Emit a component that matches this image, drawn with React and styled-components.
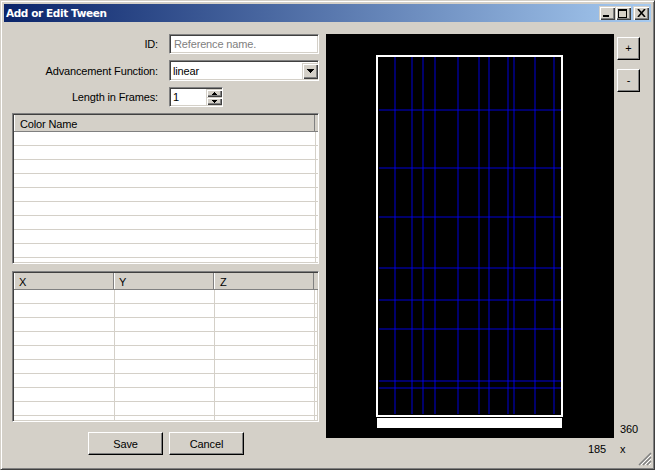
import React from "react";
import styled, { createGlobalStyle } from "styled-components";

const GlobalStyle = createGlobalStyle`
  html, body {
    margin: 0;
    padding: 0;
    background: #d4d0c8;
  }
  * {
    box-sizing: border-box;
  }
`;

const raised = `
  background: #d4d0c8;
  box-shadow: inset 1px 1px 0 #d4d0c8, inset 2px 2px 0 #fff, inset -1px -1px 0 #404040, inset -2px -2px 0 #808080;
`;

const Window = styled.div`
  position: relative;
  width: 655px;
  height: 470px;
  display: flex;
  flex-direction: column;
  padding: 3px 4px 3px 4px;
  background: #d4d0c8;
  border: 1px solid;
  border-color: #d4d0c8 #404040 #404040 #d4d0c8;
  box-shadow: inset 1px 1px 0 #ffffff, inset -1px -1px 0 #808080;
  font-family: "Liberation Sans", Arial, sans-serif;
  font-size: 11px;
  letter-spacing: -0.15px;
  color: #000;
  overflow: hidden;
`;

const TitleBar = styled.div`
  height: 18px;
  margin: 0 -1px;
  flex: none;
  display: flex;
  align-items: center;
  justify-content: space-between;
  padding: 0 2px;
  background: linear-gradient(90deg, #0a246a, #a6caf0);
`;

const Title = styled.span`
  font-family: "DejaVu Sans", Verdana, sans-serif;
  font-size: 10.5px;
  letter-spacing: -0.4px;
  font-weight: bold;
  color: #fff;
`;

const Controls = styled.div`
  display: flex;
`;

const ControlButton = styled.div`
  ${raised}
  width: 16px;
  height: 14px;
  margin-left: ${({ $gap }) => $gap || 0}px;
  display: flex;
  align-items: center;
  justify-content: center;
`;

const Body = styled.div`
  flex: 1;
  display: flex;
  padding: 12px 0 0 7px;
`;

const LeftPane = styled.div`
  width: 307px;
  display: flex;
  flex-direction: column;
`;

const FormRow = styled.div`
  display: flex;
  align-items: center;
  justify-content: flex-end;
  height: ${({ $h }) => $h}px;
  margin-bottom: ${({ $mb }) => $mb}px;
  padding-right: ${({ $pr }) => $pr || 0}px;
`;

const Label = styled.span`
  margin-right: 11px;
`;

const Sunken = styled.div`
  height: 100%;
  width: ${({ $w }) => $w}px;
  display: flex;
  align-items: center;
  background: #fff;
  border: 1px solid;
  border-color: #808080 #fff #fff #808080;
  box-shadow: inset 1px 1px 0 #404040, inset -1px -1px 0 #d4d0c8;
  padding-left: ${({ $pl }) => $pl}px;
  color: ${({ $muted }) => ($muted ? "#808080" : "#000")};
`;

const DropButton = styled.div`
  ${raised}
  width: 16px;
  height: 16px;
  margin-left: auto;
  display: flex;
  align-items: center;
  justify-content: center;
`;

const SpinColumn = styled.div`
  width: 16px;
  height: 16px;
  margin-left: auto;
  display: flex;
  flex-direction: column;
`;

const SpinButton = styled.div`
  ${raised}
  height: 8px;
  display: flex;
  align-items: center;
  justify-content: center;
`;

const ListBox = styled.div`
  height: 151px;
  margin-bottom: ${({ $mb }) => $mb || 0}px;
  background: #fff;
  border: 1px solid;
  border-color: #808080 #fff #fff #808080;
  box-shadow: inset 1px 1px 0 #404040, inset -1px -1px 0 #d4d0c8;
  padding: 1px 0 1px 1px;
  overflow: hidden;
  display: flex;
  flex-direction: column;
`;

const HeaderRow = styled.div`
  height: 17px;
  flex: none;
  display: flex;
  background: #d4d0c8;
  border-bottom: 1px solid #808080;
`;

const HeaderCell = styled.div`
  width: ${({ $w }) => $w}px;
  flex: ${({ $fill }) => ($fill ? 1 : "none")};
  padding-left: ${({ $pl }) => $pl}px;
  line-height: 18px;
  border-right: ${({ $fill }) => ($fill ? "none" : "1px solid #808080")};
  box-shadow: ${({ $fill }) => ($fill ? "none" : "inset 1px 0 0 #fff")};
`;

const Rows = styled.div`
  flex: 1;
  overflow: hidden;
  box-shadow: ${({ $line }) => ($line ? "inset -2px 0 0 #fff, inset -3px 0 0 #d4d0c8" : "none")};
`;

const Row = styled.div`
  height: 14px;
  display: flex;
  border-bottom: 1px solid #d4d0c8;
`;

const Cell = styled.div`
  width: ${({ $w }) => $w}px;
  flex: none;
  border-right: 1px solid #d4d0c8;
`;

const ButtonBar = styled.div`
  display: flex;
  justify-content: center;
  gap: 6px;
  margin-top: 10px;
  padding-left: 1px;
`;

const PushButton = styled.div`
  width: 75px;
  height: 23px;
  display: flex;
  align-items: center;
  justify-content: center;
  background: #d4d0c8;
  border: 1px solid;
  border-color: #fff #000 #000 #fff;
  box-shadow: inset -1px -1px 0 #808080;
`;

const RightPane = styled.div`
  margin-left: 7px;
  flex: 1;
  display: grid;
  grid-template-columns: 288px 1fr;
  grid-template-rows: 404px auto;
`;

const Canvas = styled.svg`
  display: block;
`;

const SidePane = styled.div`
  display: flex;
  flex-direction: column;
  align-items: flex-start;
  padding: 3px 0 3px 3px;
  gap: 9px;
`;

const ZoomButton = styled.div`
  width: 23px;
  height: 23px;
  display: flex;
  align-items: center;
  justify-content: center;
  padding-bottom: 1px;
  background: #d4d0c8;
  border: 1px solid;
  border-color: #fff #000 #000 #fff;
  box-shadow: inset -1px -1px 0 #808080;
`;

const HeightText = styled.span`
  margin: auto 0 0 3px;
`;

const WidthText = styled.span`
  margin-top: 5px;
  padding-right: 8px;
  text-align: right;
`;

const UnitText = styled.span`
  margin: 5px 0 0 6px;
`;

const Grip = styled.svg`
  position: absolute;
  right: 2px;
  bottom: 3px;
`;

const colorRows = Array.from({ length: 10 });
const pointRows = Array.from({ length: 10 });
const vLines = [394, 411, 422, 434, 457, 478, 488, 507, 513, 534, 553];
const hLines = [109, 167, 216, 267, 299, 328, 380, 387];
const CANVAS_X = 326;
const CANVAS_Y = 34;

const ArrowDown = ({ size }) => (
  <svg width={size * 2 - 1} height={size} viewBox={`0 0 ${size * 2 - 1} ${size}`} shapeRendering="crispEdges">
    {Array.from({ length: size }).map((_, i) => (
      <rect key={i} x={i} y={i} width={size * 2 - 1 - i * 2} height="1" fill="#000" />
    ))}
  </svg>
);

const ArrowUp = ({ size }) => (
  <svg width={size * 2 - 1} height={size} viewBox={`0 0 ${size * 2 - 1} ${size}`} shapeRendering="crispEdges">
    {Array.from({ length: size }).map((_, i) => (
      <rect key={i} x={i} y={size - 1 - i} width={size * 2 - 1 - i * 2} height="1" fill="#000" />
    ))}
  </svg>
);

const App = () => {
  return (
    <>
      <GlobalStyle />
      <Window>
        <TitleBar>
          <Title>Add or Edit Tween</Title>
          <Controls>
            <ControlButton>
              <svg width="8" height="8" viewBox="0 0 8 8">
                <rect x="0" y="6" width="6" height="2" fill="#000" />
              </svg>
            </ControlButton>
            <ControlButton>
              <svg width="10" height="9" viewBox="0 0 10 9">
                <path d="M0 0h9v9H0z M1 2v6h7V2z" fill="#000" fillRule="evenodd" />
              </svg>
            </ControlButton>
            <ControlButton $gap={2}>
              <svg width="9" height="8" viewBox="0 0 9 8">
                <path d="M1 0 L8 8 M8 0 L1 8" stroke="#000" strokeWidth="1.6" />
              </svg>
            </ControlButton>
          </Controls>
        </TitleBar>
        <Body>
          <LeftPane>
            <FormRow $h={20} $mb={6}>
              <Label>ID:</Label>
              <Sunken $w={150} $pl={4} $muted>Reference name.</Sunken>
            </FormRow>
            <FormRow $h={21} $mb={6}>
              <Label>Advancement Function:</Label>
              <Sunken $w={150} $pl={3}>
                linear
                <DropButton><ArrowDown size={4} /></DropButton>
              </Sunken>
            </FormRow>
            <FormRow $h={20} $mb={6} $pr={96}>
              <Label>Length in Frames:</Label>
              <Sunken $w={54} $pl={3}>
                1
                <SpinColumn>
                  <SpinButton><ArrowUp size={3} /></SpinButton>
                  <SpinButton><ArrowDown size={3} /></SpinButton>
                </SpinColumn>
              </Sunken>
            </FormRow>
            <ListBox $mb={7}>
              <HeaderRow>
                <HeaderCell $w={301} $pl={6}>Color Name</HeaderCell>
                <HeaderCell $fill />
              </HeaderRow>
              <Rows $line>
                {colorRows.map((_, i) => <Row key={i} />)}
              </Rows>
            </ListBox>
            <ListBox>
              <HeaderRow>
                <HeaderCell $w={100} $pl={5}>X</HeaderCell>
                <HeaderCell $w={100} $pl={5}>Y</HeaderCell>
                <HeaderCell $w={100} $pl={6}>Z</HeaderCell>
                <HeaderCell $fill />
              </HeaderRow>
              <Rows>
                {pointRows.map((_, i) => (
                  <Row key={i}>
                    <Cell $w={101} />
                    <Cell $w={100} />
                    <Cell $w={100} />
                  </Row>
                ))}
              </Rows>
            </ListBox>
            <ButtonBar>
              <PushButton>Save</PushButton>
              <PushButton>Cancel</PushButton>
            </ButtonBar>
          </LeftPane>
          <RightPane>
            <Canvas width="288" height="404" viewBox="0 0 288 404">
              <rect width="288" height="404" fill="#000" />
              {vLines.map((x) => (
                <rect key={x} x={x - CANVAS_X} y={57 - CANVAS_Y} width="2" height="357" fill="#0000ff" fillOpacity="0.42" />
              ))}
              {hLines.map((y) => (
                <rect key={y} x={379 - CANVAS_X} y={y - CANVAS_Y} width="182" height="2" fill="#0000ff" fillOpacity="0.42" />
              ))}
              <rect x="51" y="22" width="185" height="360" fill="none" stroke="#fff" strokeWidth="2" />
              <rect x="51" y="384" width="185" height="10" fill="#fff" />
            </Canvas>
            <SidePane>
              <ZoomButton>+</ZoomButton>
              <ZoomButton>-</ZoomButton>
              <HeightText>360</HeightText>
            </SidePane>
            <WidthText>185</WidthText>
            <UnitText>x</UnitText>
          </RightPane>
        </Body>
        <Grip width="14" height="14" viewBox="0 0 14 14">
          <path d="M13 1 L1 13 M13 5 L5 13 M13 9 L9 13" stroke="#808080" strokeWidth="1.5" />
          <path d="M13 3 L3 13 M13 7 L7 13 M13 11 L11 13" stroke="#fff" strokeWidth="1" />
        </Grip>
      </Window>
    </>
  );
};

export default App;
